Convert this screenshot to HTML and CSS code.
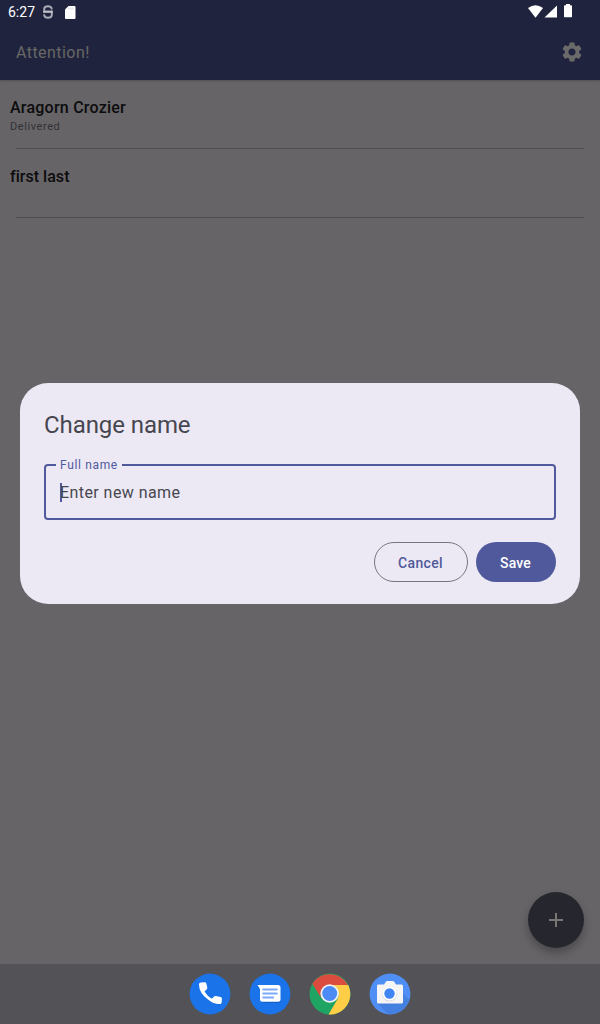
FILE: index.html
```html
<!DOCTYPE html>
<html lang="en">
<head>
<meta charset="utf-8">
<title>Attention!</title>
<link rel="stylesheet" href="styles.css">
</head>
<body>
<div class="screen">
  <header class="top">
    <div class="status">
      <span class="clock">6:27</span>
      <svg class="s-icon" width="12" height="14" viewBox="0 0 12 14" fill="none"><path d="M9.700 4.500V3.800Q9.700 1.300 6 1.300Q2.200 1.300 2.200 4V6.500H9.800V10Q9.800 12.700 6 12.700Q2.200 12.700 2.200 10V9.300" stroke="#a9aab5" stroke-width="1.900"/><path d="M1 7H11" stroke="#cfcfd6" stroke-width="1.200"/></svg>
      <svg class="sd" width="11" height="13" viewBox="0 0 11 13"><path d="M3.500 0H9.500a1 1 0 0 1 1 1v11a1 1 0 0 1-1 1H1a1 1 0 0 1-1-1V3.500z" fill="#fff"/><path d="M4 1.500v2M6 1.500v2M8 1.500v2" stroke="#d4d4da"/></svg>
      <svg class="signals" width="46" height="15" viewBox="0 0 46 15" fill="#fff"><path d="M0 4Q7.500-1.600 15 4L7.500 13.800z"/><path d="M29 1.500V13.500H16.500z"/><path d="M36.800 1.200H38V0h4v1.200h1.200a.8.800 0 0 1 .8.800v10.400a.8.800 0 0 1-.8.800h-6.400a.8.800 0 0 1-.8-.8V2a.8.800 0 0 1 .8-.8z"/></svg>
    </div>
    <div class="appbar">
      <h1 class="app-title">Attention!</h1>
      <svg width="24" height="24" viewBox="0 0 24 24" fill="#6a6a6a"><path d="M19.140 12.940c.04-.3.060-.61.060-.94 0-.32-.02-.64-.07-.94l2.030-1.580c.18-.14.230-.41.120-.61l-1.920-3.320c-.12-.22-.37-.29-.59-.22l-2.390.96c-.5-.38-1.030-.7-1.620-.94l-.36-2.540c-.04-.24-.24-.41-.48-.41h-3.840c-.24 0-.43.170-.47.410l-.36 2.540c-.59.240-1.130.57-1.620.94l-2.390-.96c-.22-.08-.47 0-.59.220L2.740 8.870c-.12.210-.08.470.12.610l2.030 1.580c-.05.300-.09.630-.09.940s.02.640.07.940l-2.030 1.580c-.18.140-.23.410-.12.610l1.920 3.320c.12.220.37.290.59.220l2.390-.96c.5.380 1.030.7 1.620.94l.36 2.540c.05.240.24.410.48.410h3.840c.24 0 .44-.17.470-.41l.36-2.540c.59-.24 1.130-.56 1.620-.94l2.390.96c.22.080.47 0 .59-.22l1.920-3.320c.12-.22.070-.47-.12-.61zM12 15.600c-1.980 0-3.600-1.620-3.600-3.600s1.620-3.600 3.600-3.600 3.600 1.620 3.600 3.600-1.620 3.600-3.600 3.600z"/></svg>
    </div>
  </header>
  <main class="list">
    <div class="row"><div class="name">Aragorn Crozier</div><div class="state">Delivered</div></div>
    <div class="row"><div class="name tight">first last</div></div>
  </main>
  <nav class="dock">
    <svg width="42" height="42" viewBox="0 0 42 42"><circle cx="21" cy="21" r="20.400" fill="#1a73e8"/><path d="M10 11.500q0-1.800 1.700-2l4-.3q1.300 0 1.600 1.200l1 4q.2 1-.5 1.800l-2.300 2.300q2.700 4.600 7.300 7.300l2.300-2.300q.7-.7 1.700-.5l4.800 1q1.300.3 1.300 1.600l-.2 3.600q-.2 1.900-2 1.900-5.700.3-11.700-4.600Q10 20 10 11.500z" fill="#fff"/></svg>
    <svg width="42" height="42" viewBox="0 0 42 42"><circle cx="21" cy="21" r="20.400" fill="#1a73e8"/><path d="M12.500 28q.7 1.700 2.500 1.700h14.500q2 0 2.500-1.700z" fill="#155cba"/><path d="M8.500 12H29a2.500 2.500 0 0 1 2.500 2.500v11.800a2.500 2.500 0 0 1-2.500 2.500H13.500a2.500 2.500 0 0 1-2.500-2.500V16z" fill="#fff"/><path d="M14.200 16.500h13.600M14.200 20.500h13.600M14.200 24.500h10" stroke="#7baaf7" stroke-width="2" stroke-linecap="round"/></svg>
    <svg width="42" height="42" viewBox="0 0 42 42"><circle cx="21" cy="21" r="20.500" fill="#1fa463"/><path d="M3.300 10.800A20.500 20.500 0 0 1 38.800 12H21A9.700 9.700 0 0 0 12.200 25z" fill="#db4c3f"/><path d="M39.200 12A20.500 20.500 0 0 1 19.500 41.500L28.600 26A9.700 9.700 0 0 0 21 12z" fill="#ffcd46"/><circle cx="20.700" cy="20.500" r="9.300" fill="#f1f1f1"/><circle cx="20.700" cy="20.500" r="7.500" fill="#4c8bf5"/></svg>
    <svg width="42" height="42" viewBox="0 0 42 42"><circle cx="21" cy="21" r="20.400" fill="#4f8ff5"/><path d="M8 30L19 41Q34 42 40.500 27L33.500 20V30z" fill="#4380e0"/><path d="M9 11.500h6l2-3q.5-.6 1.300-.6h5.400q.8 0 1.300.6l2 3h5.500q1.500 0 1.500 1.500v16q0 1.500-1.500 1.500H9.500Q8 30.500 8 29V13q0-1.500 1-1.500z" fill="#f5f5f5"/><circle cx="20.500" cy="21" r="7.400" fill="#dcdcdc"/><circle cx="20.500" cy="20.500" r="7" fill="#fff"/><circle cx="20.500" cy="20.500" r="5.200" fill="#4285f4"/></svg>
  </nav>

  <div class="fab"><svg width="24" height="24" viewBox="0 0 24 24"><path d="M5 12h14M12 5v14" stroke="#777673" stroke-width="2"/></svg></div>

  <section class="dialog">
    <h2 class="dialog-title">Change name</h2>
    <div class="field">
      <span class="label">Full name</span>
      <span class="placeholder">Enter new name</span>
    </div>
    <div class="actions">
      <button class="btn outlined">Cancel</button>
      <button class="btn filled">Save</button>
    </div>
  </section>
</div>
</body>
</html>
```
FILE: styles.css
```css
* { box-sizing: border-box; }
body { margin: 0; font-family: Roboto, "Noto Sans", sans-serif; }
h1, h2 { margin: 0; font-weight: 400; }
svg { display: block; flex: none; }
.screen { position: relative; width: 600px; height: 1024px; display: flex; flex-direction: column; background: #666467; overflow: hidden; }
.top { height: 80px; background: #20233e; box-shadow: 0 1px 2px rgba(0,0,0,.2); }
.status { height: 24px; display: flex; align-items: center; padding: 0 26px 0 8px; color: #fff; }
.clock { font-size: 14px; line-height: 24px; width: 34px; }
.sd { margin-left: 11px; }
.signals { margin: -1px 0 0 auto; }
.appbar { height: 56px; display: flex; align-items: center; justify-content: space-between; padding: 0 16px; }
.app-title { padding-top: 2px; font-size: 16px; line-height: 24px; letter-spacing: .45px; color: #686865; }
.list { flex: 1; }
.row { height: 69px; padding: 17px 10px 0; background: linear-gradient(#4f4d52, #4f4d52) 16px 68px / 568px 1px no-repeat; }
.name { font-size: 16px; line-height: 22px; font-weight: 500; letter-spacing: .23px; color: #0c0c0d; }
.tight { letter-spacing: .03px; }
.state { font-size: 11px; line-height: 16px; letter-spacing: .58px; color: #333235; }
.dock { height: 60px; display: flex; justify-content: center; align-items: center; gap: 18px; background: #535256; }
.fab { position: absolute; left: 528px; top: 892px; width: 56px; height: 56px; border-radius: 50%; display: grid; place-items: center; background: #26262f; box-shadow: 0 5px 8px rgba(0,0,0,.28); }
.dialog { position: absolute; left: 20px; top: 383px; width: 560px; height: 221px; padding: 26px 24px 22px; border-radius: 28px; background: #ece9f5; }
.dialog-title { font-size: 24px; line-height: 32px; letter-spacing: -.08px; color: #47464f; }
.field { position: relative; height: 56px; margin-top: 23px; border: 2px solid #50599b; border-radius: 4px; padding: 1px 14px 0; display: flex; align-items: center; }
.label { position: absolute; left: 10px; top: -9px; padding: 0 4px; background: #ece9f5; font-size: 12px; line-height: 16px; letter-spacing: .65px; color: #50599b; }
.placeholder { padding-top: 1px; font-size: 16px; line-height: 24px; letter-spacing: .43px; color: #47464f; background: linear-gradient(#50599b, #50599b) 0 3px / 2px 19px no-repeat; }
.actions { display: flex; justify-content: flex-end; gap: 8px; margin-top: 22px; }
.btn { height: 40px; padding: 2px 1px 0 0; border-radius: 20px; font: 500 14px/20px Roboto, sans-serif; letter-spacing: .15px; }
.outlined { width: 94px; border: 1px solid #777680; background: transparent; color: #50599b; letter-spacing: .35px; }
.filled { width: 80px; border: 0; background: #50599b; color: #fff; }
```
